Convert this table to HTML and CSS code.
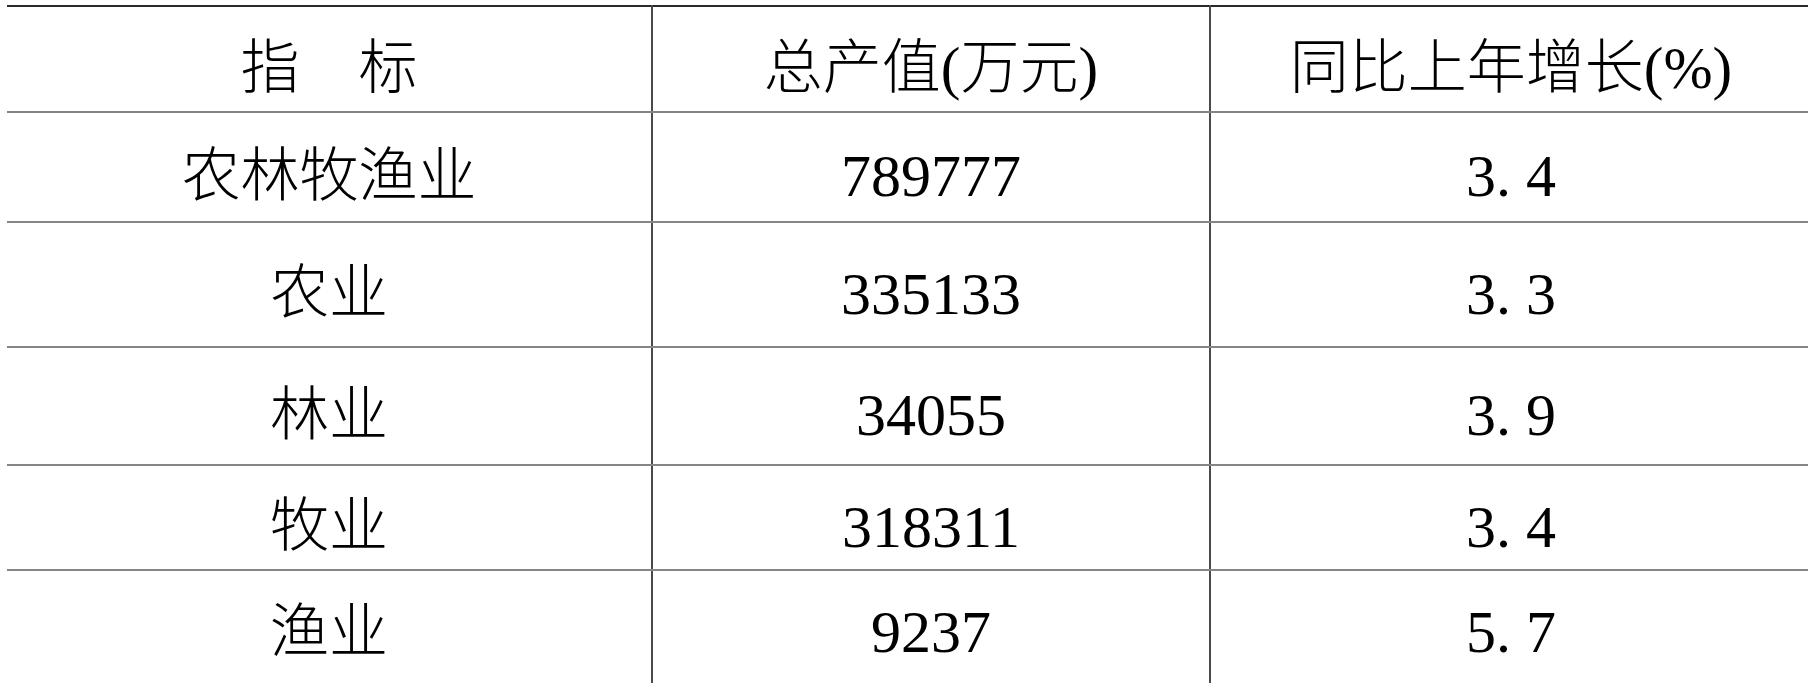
FILE: index.html
```html
<!DOCTYPE html>
<html lang="zh-CN">
<head>
<meta charset="utf-8">
<title>农林牧渔业总产值</title>
<link rel="stylesheet" href="styles.css">
</head>
<body>
<table class="stats">
  <colgroup>
    <col class="c1">
    <col class="c2">
    <col class="c3">
  </colgroup>
  <thead>
    <tr class="r-head">
      <th>指　标</th>
      <th>总产值(万元)</th>
      <th>同比上年增长(%)</th>
    </tr>
  </thead>
  <tbody>
    <tr class="r1">
      <td>农林牧渔业</td>
      <td class="num">789777</td>
      <td class="num">3<span class="dot">.</span>4</td>
    </tr>
    <tr class="r2">
      <td>农业</td>
      <td class="num">335133</td>
      <td class="num">3<span class="dot">.</span>3</td>
    </tr>
    <tr class="r3">
      <td>林业</td>
      <td class="num">34055</td>
      <td class="num">3<span class="dot">.</span>9</td>
    </tr>
    <tr class="r4">
      <td>牧业</td>
      <td class="num">318311</td>
      <td class="num">3<span class="dot">.</span>4</td>
    </tr>
    <tr class="r5">
      <td>渔业</td>
      <td class="num">9237</td>
      <td class="num">5<span class="dot">.</span>7</td>
    </tr>
  </tbody>
</table>
</body>
</html>
```

FILE: styles.css
```css
html, body {
  margin: 0;
  padding: 0;
  background: #ffffff;
  overflow: hidden;
}

body {
  width: 1808px;
  height: 683px;
}

.stats {
  margin: 5px 0 0 7px;
  border-collapse: collapse;
  table-layout: fixed;
  width: 1805px;
  font-family: "Liberation Serif", "Noto Sans CJK SC", serif;
  font-size: 59px;
  font-weight: 300;
  color: #000;
}

.c1 { width: 645px; }
.c2 { width: 558px; }
.c3 { width: 602px; }

.stats th,
.stats td {
  font-weight: 300;
  text-align: center;
  vertical-align: middle;
  padding: 18px 0 0 0;
  line-height: 1;
  border-top: 2px solid #858585;
  border-bottom: 2px solid #858585;
  border-left: 2px solid #4a4a4a;
  border-right: 2px solid #4a4a4a;
  box-sizing: border-box;
}

.stats th:first-child,
.stats td:first-child {
  border-left: none;
}

.stats th {
  border-top: 2px solid #2a2a2a;
}

.r-head th { height: 106px; }
.r1 td { height: 110px; }
.r2 td { height: 125px; }
.r3 td { height: 118px; }
.r4 td { height: 105px; }
.r5 td {
  height: 125px;
  padding-bottom: 19px;
}

.num {
  font-size: 60px;
  font-weight: 400;
}

.dot {
  margin-right: 15px;
}
```
